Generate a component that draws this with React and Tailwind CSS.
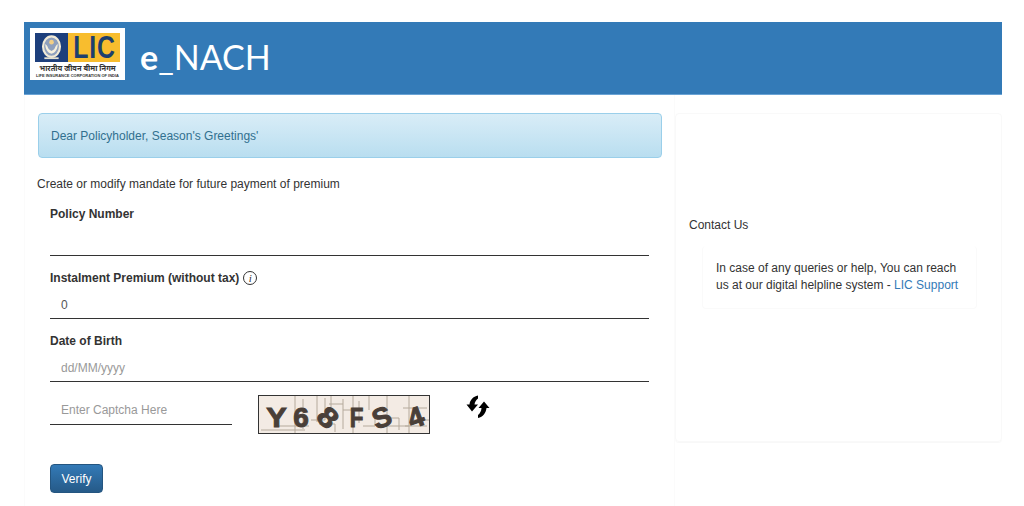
const Logo = () => {
  return (
    <div className="bg-white w-[95px] h-[52px] pl-[5px] pr-[5px] pt-[5px] flex flex-col">
      <div className="flex h-[29px]">
        <div className="w-[33px] bg-[#1d3f7c] flex items-center justify-center">
          <svg viewBox="0 0 28 28" className="w-[25px] h-[25px]">
            <ellipse cx="14" cy="13" rx="9.5" ry="11.5" fill="#8fa0bd" stroke="#f1ead6" strokeWidth="2.4" />
            <circle cx="14" cy="8" r="2.6" fill="#f3cf86" />
            <path d="M7 10c0 6 3 10 7 11 4-1 7-5 7-11-2 1-3 4-4 6l-3 2-3-2c-1-2-2-5-4-6z" fill="#f7f1de" />
            <path d="M6 25h16v2H6z" fill="#e6e2d0" />
          </svg>
        </div>
        <div className="w-[52px] bg-[#f8bd2e] flex items-center justify-center font-['Liberation_Sans',sans-serif] font-bold text-[#1d3f6e] text-[31px] leading-none">
          <span className="inline-block scale-x-[0.8] tracking-[1px]">LIC</span>
        </div>
      </div>
      <div className="text-[7.5px] leading-[9px] text-[#333] font-['Noto_Sans',sans-serif] whitespace-nowrap text-center font-bold mt-[2px]">भारतीय जीवन बीमा निगम</div>
      <div className="text-[4px] leading-[5px] text-[#333] font-bold whitespace-nowrap text-center">LIFE INSURANCE CORPORATION OF INDIA</div>
    </div>
  );
};

const Captcha = () => {
  return (
    <div className="relative w-[172px] h-[39px] border border-[#333] bg-[#f3ebe4] overflow-hidden">
      <svg viewBox="0 0 170 37" className="absolute inset-0 w-full h-full">
        <g fill="none" stroke="#b5aa9c" strokeWidth="1">
          <path d="M36 0v37M44 3v30M58 0v26M66 2v22h-14M72 0v16M84 3v30M94 0v37M100 5v22M110 0v14M128 0v37M150 0v37M2 34h44M16 30h34M70 8h14M84 14h14M120 30h30M130 22h10v12M144 12h24M146 30h22M152 24h18M60 28h16v8M104 30h12v-8" />
        </g>
      </svg>
      <div className="absolute inset-0 flex items-center text-[#4a3f38] font-['Liberation_Sans',sans-serif] font-bold text-[28px] leading-none pt-[6px] [-webkit-text-stroke:1px_#4a3f38]">
        <span className="ml-[5px] w-[25px] shrink-0 flex justify-center scale-x-[1.1]">Y</span>
        <span className="w-[24px] shrink-0 flex justify-center">6</span>
        <span className="w-[29px] shrink-0 flex justify-center rotate-[45deg] scale-x-[1.15]">8</span>
        <span className="w-[29px] shrink-0 flex justify-center scale-x-[0.8]">F</span>
        <span className="w-[22px] shrink-0 flex justify-center rotate-[-20deg]">S</span>
        <span className="ml-[10px] w-[26px] shrink-0 flex justify-center rotate-[-20deg]">4</span>
      </div>
    </div>
  );
};

const RefreshIcon = () => {
  return (
    <svg viewBox="0 0 24 24" className="w-[24px] h-[24px] text-black">
      <path fill="currentColor" d="M0.5 9.5 H3.5 C4 5 7 1.5 12 0.5 V3.5 C10 5 8.8 7 8.5 9.5 H12 L6 16.5 Z" />
      <path fill="currentColor" d="M12.5 13 L18 6.5 L23.5 13 H20.5 C20 18 17 22 12 23 V20 C14 18.5 15.3 16 15.5 13 Z" />
    </svg>
  );
};

const App = () => {
  return (
    <div className="h-[506px] bg-white pt-[22px] pl-[24px] pr-[22px] overflow-hidden font-['Liberation_Sans',Arial,sans-serif] text-[12px] text-[#333]">
      <header className="h-[73px] bg-[#337ab7] border-b border-[#6aa3d5] flex items-start pt-[6px] pl-[6px]">
        <Logo />
        <h1 className="ml-[15px] mt-[5px] text-[34px] leading-[48px] text-white font-['Lato',sans-serif]">
          <span className="font-bold">e</span>_NACH
        </h1>
      </header>

      <main className="flex">
        <section className="w-[651px] h-[411px] border-l border-r border-[#fbfbfb] pl-[13px] pt-[18px]">
          <div className="w-[624px] h-[45px] rounded-[4px] border border-[#9acfea] bg-gradient-to-b from-[#d9edf7] to-[#b9def0] px-[12px] flex items-center text-[#31708f]">
            Dear Policyholder, Season's Greetings'
          </div>

          <p className="mt-[19px] -ml-px leading-[14px]">Create or modify mandate for future payment of premium</p>

          <div className="pl-[12px] w-[611px]">
            <div className="mt-[16px]">
              <label className="block font-bold leading-[14px]">Policy Number</label>
              <div className="h-[35px] border-b border-[#333]" />
            </div>

            <div className="mt-[15px]">
              <label className="flex items-center font-bold leading-[14px] gap-[4px]">
                Instalment Premium (without tax)
                <span className="w-[14px] h-[14px] rounded-full border border-[#333] flex items-center justify-center font-['Liberation_Serif',serif] italic font-normal text-[11px] leading-none">i</span>
              </label>
              <div className="h-[34px] border-b border-[#333] px-[11px] flex items-center pt-[6px] text-[#555]">0</div>
            </div>

            <div className="mt-[15px]">
              <label className="block font-bold leading-[14px]">Date of Birth</label>
              <div className="h-[34px] border-b border-[#333] px-[11px] flex items-center pt-[6px] text-[#999]">dd/MM/yyyy</div>
            </div>

            <div className="mt-[13px] flex items-start">
              <div className="w-[182px] h-[30px] border-b border-[#333] px-[11px] flex items-center text-[#999]">Enter Captcha Here</div>
              <div className="ml-[26px]">
                <Captcha />
              </div>
              <div className="ml-[36px]">
                <RefreshIcon />
              </div>
            </div>

            <button className="mt-[30px] w-[53px] h-[29px] rounded-[4px] border border-[#245580] bg-gradient-to-b from-[#337ab7] to-[#265a88] text-white text-[12px] flex items-center justify-center">Verify</button>
          </div>
        </section>

        <aside className="w-[327px] h-[329px] mt-[18px] border border-[#f9f9f9] rounded-[4px] shadow-[0_1px_1px_rgba(0,0,0,0.03)] pl-[13px] pr-[24px] pt-[104px]">
          <p className="leading-[14px]">Contact Us</p>
          <div className="mt-[14px] ml-[13px] w-[275px] h-[63px] rounded-[4px] border-b border-x border-[#fafafa] pl-[13px] pr-[10px] pt-[14px] leading-[17px]">
            <p>
              In case of any queries or help, You can reach us at our digital helpline system - <a className="text-[#337ab7]">LIC Support</a>
            </p>
          </div>
        </aside>
      </main>
    </div>
  );
};

export default App;
